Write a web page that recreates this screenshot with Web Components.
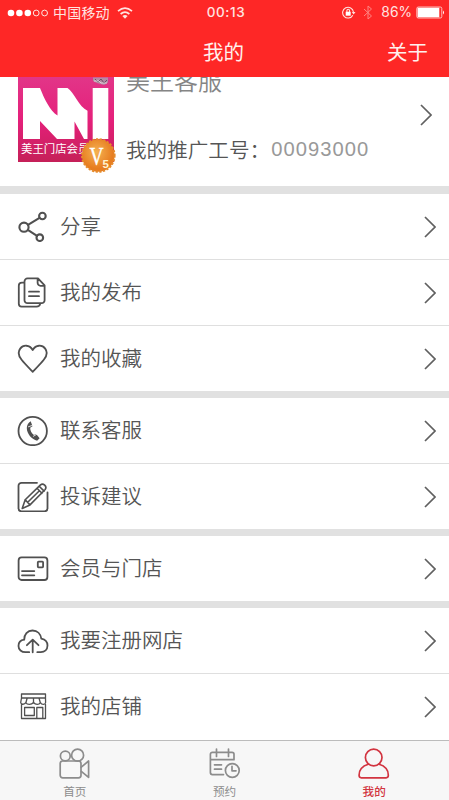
<!DOCTYPE html>
<html lang="zh-CN">
<head>
<meta charset="utf-8">
<title>我的</title>
<style>
html,body{margin:0;height:100%;background:#fff}
body{font-family:"Noto Sans CJK SC","Liberation Sans",sans-serif;overflow:hidden}
</style>
</head>
<body>
<my-page></my-page>
<script>
const define = (name, html, setup) => customElements.define(name, class extends HTMLElement {
  constructor() {
    super();
    this.attachShadow({mode: 'open'}).innerHTML = html;
  }
  connectedCallback() { if (setup) setup(this, this.shadowRoot); }
});

const icons = {
  share: '<g stroke-width="2.1"><circle cx="7" cy="17.2" r="4.6"/><circle cx="25.4" cy="6" r="3.3"/><circle cx="22.8" cy="27.7" r="3.3"/><path d="M11 14.8 22.5 7.8M10.8 19.8l9.2 6"/></g>',
  docs: '<path d="M11 2.4h10l6.6 7v14.8a3 3 0 0 1-3 3H10.500a3 3 0 0 1-3-3V5.400a3 3 0 0 1 3-3zM20.600 2.800v4a3 3 0 0 0 3 3h3.700M7.500 6.600H5a3.200 3.200 0 0 0-3.200 3.200v18A2.800 2.800 0 0 0 4.600 30.600H19.500q3.200 0 3.700-3M12 15.700h10M12 20.200h10"/>',
  heart: '<path d="M15.700 29.800C12 26 7.500 21.500 4.600 17.800 1.500 14 .9 9.800 3.200 6.600 6.300 2.500 12.500 2.600 15.700 8c3.200-5.400 9.400-5.500 12.500-1.400 2.300 3.200 1.700 7.400-1.400 11.200-2.900 3.700-7.400 8.200-11.100 12z"/>',
  phone: '<circle cx="15.700" cy="17" r="14.200"/><path fill="currentColor" stroke="none" d="M13.700 7.200 15.500 12.200 13.200 13.800c-.1 2.700 1.300 5.300 3.700 7.200l2.300-1 3.400 4.200-2.500 2.500C15 25.500 9.800 20 9.800 14c0-3 1.600-5.600 3.900-6.800z"/><path stroke="#fff" stroke-width=".8" d="m11.400 12.800 4-1.500M16.300 22.300l3.500-2"/>',
  edit: '<path d="M20 2.800H4.500a3 3 0 0 0-3 3v22.500a3 3 0 0 0 3 3h23a3 3 0 0 0 3-3V12.500"/><path stroke-width="1.600" d="m5.200 28.400 3-8.700L23.500 4.900q2-1.800 4.200.3t.5 4.300L13 24.900zM8.200 19.700l4.800 5.200M20 8.300l5 5M22.200 6.200l4.900 4.900M10.700 22.300 22.400 10.800"/>',
  card: '<rect x="1.600" y="5.400" width="28.800" height="22.600" rx="3"/><rect x="20.800" y="9.700" width="5.300" height="5.600" rx=".7"/><path d="M5 19.100h12.300M5 23.300h12.300"/>',
  cloud: '<path d="M12.200 28.200H8.500c-4 0-7-2.500-7-6.300 0-3.500 2.500-5.800 5.700-6.200C7 10.200 10.600 6.500 15.500 6.500s8.200 3.400 8.800 8.200c3.600.8 6.200 3.300 6.200 6.900 0 4-2.900 6.600-6.700 6.600h-3.500M15.700 28.300V15.600M9.900 21.200l5.800-5.600 5.800 5.600"/>',
  shop: '<g stroke-width="1.300"><path d="M4.500 4h24v4h-24zM4.500 8 3.700 12.500c.2 2.200 3.700 2.500 5.100 0 1.300 2.500 5.700 2.500 7.700 0 2 2.500 5.600 2.500 6.900 0 1.300 2.500 5 2.500 5.200 0L28.500 8M10.200 8l-1.400 5M16.500 8v5M22 8l1.400 5M4.500 14.500v14h24v-14M7.600 17.500h9.700v8H7.600zM19.800 28.500v-11h6v11"/></g>',
  camera: '<g stroke-width="1.700"><circle cx="6.300" cy="8" r="4.900"/><circle cx="18.600" cy="7.200" r="6"/><rect x="1.200" y="13" width="20.800" height="16.800" rx="2.500"/><path d="m22.300 19.200 7.300-6.200v16.300l-7.300-6"/></g>',
  calendar: '<g stroke-width="1.700"><path d="M14.500 26.600H3.400a2 2 0 0 1-2-2V6.300a2 2 0 0 1 2-2H23a2 2 0 0 1 2 2v5.400H1.400M7.500 1v7.500M19.500 1v7.500M5.500 16.800h7M5.500 21.200h7"/><circle cx="23.300" cy="22.500" r="6.900"/><path d="M23 18.300v4.500h4"/></g>',
  user: '<g stroke-width="1.700"><circle cx="15.700" cy="9.500" r="8.300"/><path d="M10.300 16.200C4.500 18 1.100 22 1.100 27v.6q0 2.200 2.200 2.200h24.800q2.200 0 2.200-2.200V27c0-5-3.400-9-9.200-10.800"/></g>'
};

define('line-icon', `<style>
:host{display:block;width:32px;height:32px;flex:none}
svg{display:block;fill:none;stroke:currentColor;stroke-width:1.8;stroke-linecap:round;stroke-linejoin:round}
</style><svg width="32" height="32" viewBox="0 0 32 32"></svg>`,
  (el, root) => { root.querySelector('svg').innerHTML = icons[el.getAttribute('name')]; });

define('chevron-right', `<style>
:host{display:block;width:12px;height:22px;color:#606060}
svg{display:block;fill:none;stroke:currentColor;stroke-width:1.700}
</style><svg width="12" height="22" viewBox="0 0 12 22"><path d="m1 1 10 10L1 21"/></svg>`);

define('status-bar', `<style>
:host{display:grid;grid-template-columns:1fr auto 1fr;align-items:center;height:25px;padding:0 7px;color:#ffe4e0;font-size:13.500px;line-height:25px}
.l,.r{display:flex;align-items:center}.r{justify-content:flex-end}
.time{font:500 13.500px/25px Inter,"Liberation Sans",sans-serif;letter-spacing:.55px;margin-left:3px}
.carrier{margin:0 7px 0 4px;font-size:14px;letter-spacing:.2px}
.pct{font:13.800px/25px Inter,"Liberation Sans",sans-serif;margin:0 4px 0 8px}
svg{display:block;fill:none;stroke:currentColor}
</style>
<div class="l">
<svg width="42" height="10" viewBox="0 0 42 10"><g fill="#fff" stroke="none"><circle cx="4" cy="5" r="3.300"/><circle cx="12.400" cy="5" r="3.300"/><circle cx="20.800" cy="5" r="3.300"/></g><circle cx="29.200" cy="5" r="2.900"/><circle cx="37.600" cy="5" r="2.900"/></svg>
<span class="carrier">中国移动</span>
<svg width="16" height="12" viewBox="0 0 16 12" stroke-width="1.700"><path d="M1 4.200q7-6 14 0M3.600 7q4.400-3.700 8.800 0"/><path fill="#ffe4e0" stroke="none" d="M5.400 9q2.600-2 5.200 0L8 11.700z"/></svg>
</div>
<span class="time">00:13</span>
<div class="r">
<svg width="14" height="13" viewBox="0 0 14 13" stroke-width="1.100"><path d="M10.800 9.200a5.400 5.400 0 1 1 .6-3.200"/><path fill="#ffe4e0" stroke="none" d="M9.800 6h3.700l-1.900 2.500z"/><path fill="#fff" stroke="none" d="M3.700 5.700h5v4h-5z"/><path d="M4.900 6V4.500a1.300 1.300 0 0 1 2.600 0V6"/></svg>
<svg width="10" height="15" viewBox="0 0 10 15" style="margin-left:7px;opacity:.5"><path d="m1 4 7.500 7L5 14V1l3.500 3L1 11"/></svg>
<span class="pct">86%</span>
<svg width="29" height="13" viewBox="0 0 29 13" style="margin-right:-3px"><rect x=".8" y="1" width="25" height="11" rx="1.500" stroke-width=".8"/><path fill="#fff" stroke="none" d="M1.600 1.800h21.700v9.400H1.600zM27 4.500q2 2 0 4z"/></svg>
</div>`);

define('nav-bar', `<style>
:host{display:grid;grid-template-columns:1fr auto 1fr;align-items:center;height:52px;padding:0 21px;box-sizing:border-box;color:#fff0ed;font-size:20.500px;line-height:48px}
::slotted([slot=action]){text-align:right;grid-column:3}
.t{grid-column:2;margin-right:2px}
</style><span class="t"><slot></slot></span><slot name="action"></slot>`);

define('shop-avatar', `<style>
:host{display:block;width:100px;height:98px;overflow:visible}
svg{display:block;overflow:visible;font-family:"Noto Sans CJK SC",sans-serif}
</style>
<svg width="100" height="98" viewBox="18 77 100 98">
<defs><linearGradient id="p" x2="0" y2="1"><stop stop-color="#e23588"/><stop offset=".5" stop-color="#e5207b"/><stop offset="1" stop-color="#c52058"/></linearGradient>
<radialGradient id="g" cx=".45" cy=".4"><stop stop-color="#f5b252"/><stop offset="1" stop-color="#e77d20"/></radialGradient></defs>
<path fill="url(#p)" d="M18 77h96v85H18z"/>
<path fill="#fff" d="M23 88h17C44 98 50 111 57.500 115.500V88h10C74 92 79 107 87.500 110.700V139H84L74.500 121.500V139H57L40 121V139H23zM92.700 88h15.600v51H92.700z"/>
<path fill="#b58aa3" d="M93 77.500h15v5l-4 2.500-7-2-4-2z"/><path stroke="#6c5066" fill="none" d="m95 79 3 3 3-3 3 4 3-3"/><path stroke="#eee" fill="none" stroke-width=".7" d="M94 81h5l2 2h6"/>
<text x="21" y="152.700" font-size="11.400" fill="#fff">美王门店会员</text>
<circle cx="98.300" cy="155.500" r="16.300" fill="url(#g)" stroke="#e58b2c" stroke-width="2" stroke-dasharray="2.200 1.500"/>
<text x="89.500" y="165" font-family="Liberation Serif" font-size="26" fill="#fff" stroke="#fff" stroke-width=".4" textLength="14" lengthAdjust="spacingAndGlyphs">V</text>
<text x="102.500" y="167.500" font-family="Liberation Sans" font-weight="bold" font-size="11.500" fill="#fff4d0">5</text>
</svg>`);

define('profile-card', `<style>
:host{display:grid;grid-template-columns:108px 1fr 12px;height:109px;padding:0 17px 0 18px;overflow:hidden;background:#fff}
.info{display:flex;flex-direction:column;justify-content:space-between;height:95px;margin-top:-13px;white-space:nowrap}
.name{font-size:24px;line-height:32px;color:#858585;font-weight:350}
.no{display:flex;font-size:20.600px;line-height:30px;color:#555;font-weight:350;margin-bottom:-5px}
.num{font:20.200px/30px "Liberation Sans",sans-serif;letter-spacing:1.050px;color:#999;margin-left:1px}
chevron-right{margin-top:27px}
</style><shop-avatar></shop-avatar>
<div class="info"><div class="name"><slot></slot></div><div class="no"><span>我的推广工号：</span><span class="num"><slot name="number"></slot></span></div></div>
<chevron-right></chevron-right>`);

define('menu-group', `<style>
:host{display:flex;flex-direction:column;gap:1px;background:#dfdfdf}
</style><slot></slot>`);

define('menu-row', `<style>
:host{display:flex;height:65px;padding:0 13px 0 17px;box-sizing:border-box;background:#fff;color:#505050}
line-icon{margin-top:16px}
.label{flex:1;margin-left:11px;font-size:20.500px;line-height:63px;font-weight:350;color:#555;white-space:nowrap}
chevron-right{margin-top:22px}
</style><line-icon></line-icon><span class="label"><slot></slot></span><chevron-right></chevron-right>`,
  (el, root) => {
    const i = document.createElement('line-icon');
    i.setAttribute('name', el.getAttribute('icon'));
    root.querySelector('line-icon').replaceWith(i);
  });
define('tab-item', `<style>
:host{display:flex;flex-direction:column;align-items:center;flex:1;color:#8c8c8c;font-size:11.600px;line-height:18px}
:host([active]){color:#d23440;font-weight:500}
span{margin-top:2px}
</style><div></div><span><slot></slot></span>`,
  (el, root) => {
    const i = document.createElement('line-icon');
    i.setAttribute('name', el.getAttribute('icon'));
    root.querySelector('div').replaceWith(i);
  });
define('tab-bar', `<style>
:host{display:flex;height:60px;box-sizing:border-box;border-top:1px solid #bcbcbc;background:#f7f7f7;padding-top:7px}
</style><slot></slot>`);

define('my-page', `<style>
:host{display:flex;flex-direction:column;width:449px;height:800px;background:#fff}
header{background:#fe2726;height:77px;flex:none}
main{display:flex;flex-direction:column;gap:7px;background:#e1e1e1;flex:none;height:663px;overflow:hidden}
profile-card{margin-bottom:1px}
menu-group:last-child{padding-bottom:1px;background:linear-gradient(#dfdfdf 90%,#fff 90%)}
</style>
<header><status-bar></status-bar><nav-bar>我的<span slot="action">关于</span></nav-bar></header>
<main>
<profile-card>美王客服<span slot="number">00093000</span></profile-card>
<menu-group><menu-row icon="share">分享</menu-row><menu-row icon="docs">我的发布</menu-row><menu-row icon="heart">我的收藏</menu-row></menu-group>
<menu-group><menu-row icon="phone">联系客服</menu-row><menu-row icon="edit">投诉建议</menu-row></menu-group>
<menu-group><menu-row icon="card">会员与门店</menu-row></menu-group>
<menu-group><menu-row icon="cloud">我要注册网店</menu-row><menu-row icon="shop">我的店铺</menu-row></menu-group>
</main>
<tab-bar><tab-item icon="camera">首页</tab-item><tab-item icon="calendar">预约</tab-item><tab-item icon="user" active>我的</tab-item></tab-bar>`);
</script>
</body>
</html>
